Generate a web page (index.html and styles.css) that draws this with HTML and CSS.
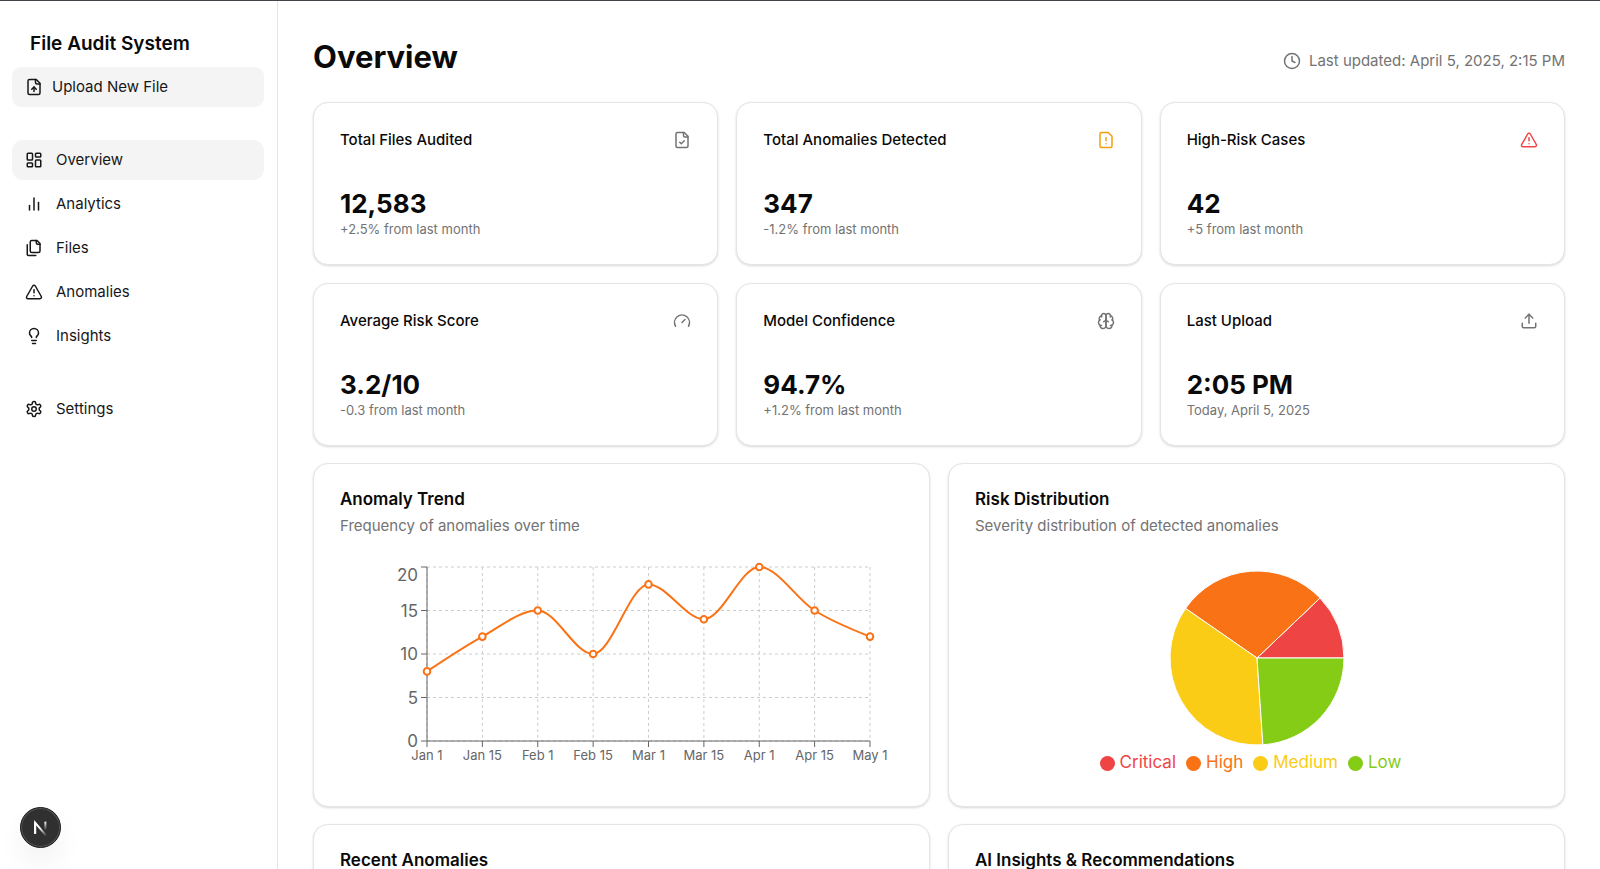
FILE: index.html
```html
<!DOCTYPE html>
<html lang="en">
<head>
<meta charset="utf-8">
<meta name="viewport" content="width=device-width, initial-scale=1">
<title>File Audit System</title>
<link rel="stylesheet" href="styles.css">
<script src="charts.js" defer></script>
</head>
<body>
<div class="shell">
  <aside class="sidebar">
    <div class="brand">File Audit System</div>
    <button class="upload" type="button">
      <svg class="icon" viewBox="0 0 24 24" aria-hidden="true"><path d="M15 2H6a2 2 0 0 0-2 2v16a2 2 0 0 0 2 2h12a2 2 0 0 0 2-2V7Z"/><path d="M14 2v4a2 2 0 0 0 2 2h4"/><path d="M12 12v6"/><path d="m15 15-3-3-3 3"/></svg>
      Upload New File
    </button>
    <nav class="nav" aria-label="Main">
      <a class="nav-link active" href="#overview" aria-current="page"><svg class="icon" viewBox="0 0 24 24" aria-hidden="true"><rect width="7" height="9" x="3" y="3" rx="1"/><rect width="7" height="5" x="14" y="3" rx="1"/><rect width="7" height="9" x="14" y="12" rx="1"/><rect width="7" height="5" x="3" y="16" rx="1"/></svg>Overview</a>
      <a class="nav-link" href="#analytics"><svg class="icon" viewBox="0 0 24 24" aria-hidden="true"><path d="M18 20V10"/><path d="M12 20V4"/><path d="M6 20v-6"/></svg>Analytics</a>
      <a class="nav-link" href="#files"><svg class="icon" viewBox="0 0 24 24" aria-hidden="true"><path d="M20 7h-3a2 2 0 0 1-2-2V2"/><path d="M9 18a2 2 0 0 1-2-2V4a2 2 0 0 1 2-2h7l4 4v10a2 2 0 0 1-2 2Z"/><path d="M3 7.6v12.8A1.6 1.6 0 0 0 4.6 22h9.8"/></svg>Files</a>
      <a class="nav-link" href="#anomalies"><svg class="icon" viewBox="0 0 24 24" aria-hidden="true"><path d="m21.73 18-8-14a2 2 0 0 0-3.48 0l-8 14A2 2 0 0 0 4 21h16a2 2 0 0 0 1.73-3"/><path d="M12 9v4"/><path d="M12 17h.01"/></svg>Anomalies</a>
      <a class="nav-link" href="#insights"><svg class="icon" viewBox="0 0 24 24" aria-hidden="true"><path d="M15 14c.2-1 .7-1.700 1.500-2.500 1-.9 1.500-2.200 1.500-3.500A6 6 0 0 0 6 8c0 1 .2 2.200 1.500 3.500.7.700 1.300 1.500 1.500 2.500"/><path d="M9 18h6"/><path d="M10 22h4"/></svg>Insights</a>
    </nav>
    <nav class="nav" aria-label="Preferences">
      <a class="nav-link" href="#settings"><svg class="icon" viewBox="0 0 24 24" aria-hidden="true"><path d="M12.22 2h-.44a2 2 0 0 0-2 2v.18a2 2 0 0 1-1 1.730l-.43.25a2 2 0 0 1-2 0l-.15-.08a2 2 0 0 0-2.730.730l-.22.38a2 2 0 0 0 .730 2.730l.15.1a2 2 0 0 1 1 1.720v.51a2 2 0 0 1-1 1.740l-.15.09a2 2 0 0 0-.730 2.730l.22.38a2 2 0 0 0 2.730.730l.15-.08a2 2 0 0 1 2 0l.43.25a2 2 0 0 1 1 1.730V20a2 2 0 0 0 2 2h.44a2 2 0 0 0 2-2v-.18a2 2 0 0 1 1-1.730l.43-.25a2 2 0 0 1 2 0l.15.08a2 2 0 0 0 2.730-.730l.22-.39a2 2 0 0 0-.730-2.730l-.15-.08a2 2 0 0 1-1-1.740v-.5a2 2 0 0 1 1-1.740l.15-.09a2 2 0 0 0 .730-2.730l-.22-.38a2 2 0 0 0-2.730-.730l-.15.08a2 2 0 0 1-2 0l-.43-.25a2 2 0 0 1-1-1.730V4a2 2 0 0 0-2-2z"/><circle cx="12" cy="12" r="3"/></svg>Settings</a>
    </nav>
  </aside>

  <main class="main">
    <header class="page-head">
      <h1>Overview</h1>
      <p class="updated"><svg class="icon" viewBox="0 0 24 24" aria-hidden="true"><circle cx="12" cy="12" r="10"/><path d="M12 6v6l4 2"/></svg>Last updated: April 5, 2025, 2:15 PM</p>
    </header>

    <section class="stats">
      <article class="card">
        <div class="stat-head"><h2>Total Files Audited</h2><svg class="icon" viewBox="0 0 24 24" aria-hidden="true"><path d="M15 2H6a2 2 0 0 0-2 2v16a2 2 0 0 0 2 2h12a2 2 0 0 0 2-2V7Z"/><path d="M14 2v4a2 2 0 0 0 2 2h4"/><path d="m9 15 2 2 4-4"/></svg></div>
        <p class="value">12,583</p><p class="note">+2.5% from last month</p>
      </article>
      <article class="card">
        <div class="stat-head"><h2>Total Anomalies Detected</h2><svg class="icon warn" viewBox="0 0 24 24" aria-hidden="true"><path d="M15 2H6a2 2 0 0 0-2 2v16a2 2 0 0 0 2 2h12a2 2 0 0 0 2-2V7Z"/><path d="M12 9v4"/><path d="M12 17h.01"/></svg></div>
        <p class="value">347</p><p class="note">-1.2% from last month</p>
      </article>
      <article class="card">
        <div class="stat-head"><h2>High-Risk Cases</h2><svg class="icon danger" viewBox="0 0 24 24" aria-hidden="true"><path d="m21.73 18-8-14a2 2 0 0 0-3.48 0l-8 14A2 2 0 0 0 4 21h16a2 2 0 0 0 1.73-3"/><path d="M12 9v4"/><path d="M12 17h.01"/></svg></div>
        <p class="value">42</p><p class="note">+5 from last month</p>
      </article>
      <article class="card">
        <div class="stat-head"><h2>Average Risk Score</h2><svg class="icon" viewBox="0 0 24 24" aria-hidden="true"><path d="m12 14 4-4"/><path d="M3.34 19a10 10 0 1 1 17.32 0"/></svg></div>
        <p class="value">3.2/10</p><p class="note">-0.3 from last month</p>
      </article>
      <article class="card">
        <div class="stat-head"><h2>Model Confidence</h2><svg class="icon" viewBox="0 0 24 24" aria-hidden="true"><path d="M12 5a3 3 0 1 0-5.997.125 4 4 0 0 0-2.526 5.770 4 4 0 0 0 .556 6.588A4 4 0 1 0 12 18Z"/><path d="M12 5a3 3 0 1 1 5.997.125 4 4 0 0 1 2.526 5.770 4 4 0 0 1-.556 6.588A4 4 0 1 1 12 18Z"/><path d="M15 13a4.500 4.500 0 0 1-3-4 4.500 4.500 0 0 1-3 4"/><path d="M17.599 6.500a3 3 0 0 0 .399-1.375"/><path d="M6.003 5.125A3 3 0 0 0 6.401 6.500"/><path d="M3.477 10.896a4 4 0 0 1 .585-.396"/><path d="M19.938 10.500a4 4 0 0 1 .585.396"/><path d="M6 18a4 4 0 0 1-1.967-.516"/><path d="M19.967 17.484A4 4 0 0 1 18 18"/></svg></div>
        <p class="value">94.7%</p><p class="note">+1.2% from last month</p>
      </article>
      <article class="card">
        <div class="stat-head"><h2>Last Upload</h2><svg class="icon" viewBox="0 0 24 24" aria-hidden="true"><path d="M21 15v4a2 2 0 0 1-2 2H5a2 2 0 0 1-2-2v-4"/><path d="m17 8-5-5-5 5"/><path d="M12 3v12"/></svg></div>
        <p class="value">2:05 PM</p><p class="note">Today, April 5, 2025</p>
      </article>
    </section>

    <section class="panels">
      <article class="card">
        <h2 class="panel-title">Anomaly Trend</h2>
        <p class="panel-desc">Frequency of anomalies over time</p>
        <svg class="chart" id="trend" role="img" aria-label="Anomaly trend line chart"></svg>
      </article>
      <article class="card">
        <h2 class="panel-title">Risk Distribution</h2>
        <p class="panel-desc">Severity distribution of detected anomalies</p>
        <div class="chart pie-chart">
          <svg class="pie" id="pie" viewBox="-88 -88 176 176" role="img" aria-label="Risk distribution pie chart"></svg>
          <ul class="legend">
            <li class="critical">Critical</li>
            <li class="high">High</li>
            <li class="medium">Medium</li>
            <li class="low">Low</li>
          </ul>
        </div>
      </article>
      <article class="card tall">
        <h2 class="panel-title">Recent Anomalies</h2>
      </article>
      <article class="card tall">
        <h2 class="panel-title">AI Insights &amp; Recommendations</h2>
      </article>
    </section>
  </main>
</div>

<button class="dev-badge" type="button" aria-label="Open developer tools">
  <svg viewBox="0 0 40 40" aria-hidden="true">
    <defs>
      <linearGradient id="diag" gradientUnits="userSpaceOnUse" x1="20" y1="20" x2="27" y2="28"><stop offset="0" stop-color="#fff"/><stop offset="1" stop-color="#fff" stop-opacity="0"/></linearGradient>
      <linearGradient id="stem" gradientUnits="userSpaceOnUse" x1="0" y1="14" x2="0" y2="23"><stop offset="0" stop-color="#fff"/><stop offset="1" stop-color="#fff" stop-opacity="0"/></linearGradient>
    </defs>
    <path d="M14.500 26.500V15L26 28.500" fill="none" stroke="url(#diag)" stroke-width="2"/>
    <path d="M14.500 26.500V14.500" stroke="#fff" stroke-width="2"/>
    <path d="M25 14v10" stroke="url(#stem)" stroke-width="2"/>
  </svg>
</button>
</body>
</html>
```

FILE: styles.css
```css
* {
  box-sizing: border-box;
}

body {
  margin: 0;
  background: #fff;
  color: #0a0a0a;
  font-family: Inter, "Liberation Sans", sans-serif;
  font-size: 15px;
  line-height: 22px;
}

h1, h2, p, ul {
  margin: 0;
  padding: 0;
}

.icon {
  width: 18px;
  height: 18px;
  flex: none;
  fill: none;
  stroke: currentColor;
  stroke-width: 2;
  stroke-linecap: round;
  stroke-linejoin: round;
}

.shell {
  display: flex;
  height: 100vh;
  border-top: 1px solid #444148;
  overflow: hidden;
}

.sidebar {
  flex: none;
  width: 278px;
  padding: 29px 13px 0 12px;
  border-right: 1px solid #e5e5e5;
}

.brand {
  padding: 0 18px;
  font-size: 19px;
  font-weight: 600;
  line-height: 28px;
}

.upload {
  display: flex;
  align-items: center;
  gap: 9px;
  width: 100%;
  height: 40px;
  margin-top: 9px;
  padding: 0 13px;
  border: 0;
  border-radius: 9px;
  background: #f4f4f4;
  color: #171717;
  font: inherit;
  cursor: pointer;
}

.nav {
  display: flex;
  flex-direction: column;
  gap: 4px;
  margin-top: 33px;
}

.nav-link {
  display: flex;
  align-items: center;
  gap: 13px;
  padding: 9px 13px;
  border-radius: 11px;
  color: #171717;
  text-decoration: none;
}

.nav-link.active {
  background: #f4f4f4;
}

.main {
  flex: 1;
  min-width: 0;
  padding: 36px 35px;
  overflow-y: auto;
  scrollbar-width: none;
}

.page-head {
  display: flex;
  align-items: center;
  justify-content: space-between;
  margin-bottom: 26px;
}

h1 {
  font-size: 31px;
  font-weight: 700;
  line-height: 39px;
}

.updated {
  display: flex;
  align-items: center;
  gap: 8px;
  padding-top: 8px;
  color: #737373;
}

.stats {
  display: grid;
  grid-template-columns: repeat(3, minmax(0, 1fr));
  gap: 18px;
}

.card {
  padding: 26px;
  border: 1px solid #e5e5e5;
  border-radius: 15px;
  background: #fff;
  box-shadow: 0 1px 3px rgba(0, 0, 0, 0.1), 0 1px 2px rgba(0, 0, 0, 0.06);
}

.stat-head {
  display: flex;
  align-items: center;
  justify-content: space-between;
  margin-bottom: 35px;
  color: #737373;
}

.stat-head h2 {
  color: #0a0a0a;
  font-size: 15px;
  font-weight: 500;
  line-height: 22px;
}

.stat-head .warn {
  color: #f59e0b;
}

.stat-head .danger {
  color: #ef4444;
}

.value {
  font-size: 26px;
  font-weight: 700;
  line-height: 35px;
}

.note {
  color: #737373;
  font-size: 13px;
  line-height: 17px;
}

.panels {
  display: grid;
  grid-template-columns: repeat(2, minmax(0, 1fr));
  gap: 17px 18px;
  margin-top: 17px;
}

.panel-title {
  font-size: 17px;
  font-weight: 600;
  line-height: 19px;
}

.panel-desc {
  margin-top: 6px;
  color: #737373;
}

.chart {
  display: block;
  width: 100%;
  height: 217px;
  margin-top: 26px;
  overflow: visible;
}

.grid {
  stroke: #ccc;
  stroke-dasharray: 3 3;
}

.axis {
  stroke: #666;
}

.tick {
  fill: #666;
  font-size: 17px;
}

.tick-small {
  font-size: 13px;
}

.line {
  fill: none;
  stroke: #f97316;
  stroke-width: 2;
}

.dot {
  fill: #fff;
  stroke: #f97316;
  stroke-width: 2;
}

.pie-chart {
  display: flex;
  flex-direction: column;
  align-items: center;
  padding-top: 7px;
}

.pie {
  width: 176px;
  height: 176px;
}

.pie path {
  stroke: #fff;
}

.legend {
  display: flex;
  gap: 10px;
  padding-right: 12px;
  font-size: 17px;
  line-height: 32px;
  list-style: none;
}

.legend li {
  display: flex;
  align-items: center;
  gap: 5px;
}

.legend li::before {
  width: 15px;
  height: 15px;
  margin-top: 2px;
  border-radius: 50%;
  background: currentColor;
  content: "";
}

.critical { color: #ef4444; fill: #ef4444; }
.high { color: #f97316; fill: #f97316; }
.medium { color: #facc15; fill: #facc15; }
.low { color: #84cc16; fill: #84cc16; }

.tall {
  min-height: 344px;
}

.dev-badge {
  position: fixed;
  bottom: 21px;
  left: 20px;
  width: 41px;
  height: 41px;
  padding: 0;
  border: 1px solid #1c1c1c;
  border-radius: 50%;
  background: #303030;
  box-shadow: inset 0 0 0 1px #555, 0 16px 32px -8px rgba(0, 0, 0, 0.14);
  cursor: pointer;
}

.dev-badge svg {
  display: block;
  width: 100%;
}
```

FILE: charts.js
```js
const NS = "http://www.w3.org/2000/svg";

function add(parent, name, attrs, text) {
  const el = document.createElementNS(NS, name);
  for (const key in attrs) el.setAttribute(key, attrs[key]);
  if (text !== undefined) el.textContent = text;
  parent.appendChild(el);
  return el;
}

const labels = ["Jan 1", "Jan 15", "Feb 1", "Feb 15", "Mar 1", "Mar 15", "Apr 1", "Apr 15", "May 1"];
const counts = [8, 12, 15, 10, 18, 14, 20, 15, 12];

// Monotone cubic interpolation through evenly spaced points.
function monotonePath(pts) {
  const h = pts[1][0] - pts[0][0];
  const n = pts.length;
  const s = [];
  for (let i = 0; i < n - 1; i++) s.push((pts[i + 1][1] - pts[i][1]) / h);
  const t = [];
  for (let i = 1; i < n - 1; i++) {
    const a = s[i - 1], b = s[i];
    t[i] = (Math.sign(a) + Math.sign(b)) * Math.min(Math.abs(a), Math.abs(b), Math.abs(a + b) / 4);
  }
  t[0] = (3 * s[0] - t[1]) / 2;
  t[n - 1] = (3 * s[n - 2] - t[n - 2]) / 2;
  let d = `M${pts[0][0]},${pts[0][1]}`;
  for (let i = 0; i < n - 1; i++) {
    const [x0, y0] = pts[i], [x1, y1] = pts[i + 1];
    d += `C${x0 + h / 3},${y0 + t[i] * h / 3} ${x1 - h / 3},${y1 - t[i + 1] * h / 3} ${x1},${y1}`;
  }
  return d;
}

function drawTrend() {
  const svg = document.getElementById("trend");
  svg.replaceChildren();
  const left = 87, top = 4, bottom = 178;
  const right = svg.getBoundingClientRect().width - 33;
  const x = i => left + (right - left) * i / (labels.length - 1);
  const y = v => bottom - (bottom - top) * v / 20;

  [0, 5, 10, 15, 20].forEach(v => add(svg, "line", { class: "grid", x1: left, x2: right, y1: y(v), y2: y(v) }));
  labels.forEach((_, i) => add(svg, "line", { class: "grid", x1: x(i), x2: x(i), y1: top, y2: bottom }));
  add(svg, "line", { class: "axis", x1: left, x2: right, y1: bottom, y2: bottom });
  add(svg, "line", { class: "axis", x1: left, x2: left, y1: top, y2: bottom });
  labels.forEach((label, i) => {
    add(svg, "line", { class: "axis", x1: x(i), x2: x(i), y1: bottom, y2: bottom + 6 });
    add(svg, "text", { class: "tick tick-small", x: x(i), y: bottom + 19, "text-anchor": "middle" }, label);
  });
  [0, 5, 10, 15, 20].forEach(v => {
    add(svg, "line", { class: "axis", x1: left - 6, x2: left, y1: y(v), y2: y(v) });
    add(svg, "text", { class: "tick", x: left - 9, y: Math.max(y(v), 12) + 6, "text-anchor": "end" }, v);
  });

  const pts = counts.map((v, i) => [x(i), y(v)]);
  add(svg, "path", { class: "line", d: monotonePath(pts) });
  pts.forEach(([cx, cy]) => add(svg, "circle", { class: "dot", cx, cy, r: 3.3 }));
}

function drawPie() {
  const svg = document.getElementById("pie");
  const slices = [["critical", 42], ["high", 98], ["medium", 124], ["low", 83]];
  const total = slices.reduce((sum, s) => sum + s[1], 0);
  const r = 87;
  const at = a => `${r * Math.cos(a)},${-r * Math.sin(a)}`;
  let angle = 0;
  slices.forEach(([name, value]) => {
    const end = angle + 2 * Math.PI * value / total;
    add(svg, "path", { class: name, d: `M0,0L${at(angle)}A${r},${r} 0 0 0 ${at(end)}Z` });
    angle = end;
  });
}

drawTrend();
drawPie();
window.addEventListener("resize", drawTrend);
```
